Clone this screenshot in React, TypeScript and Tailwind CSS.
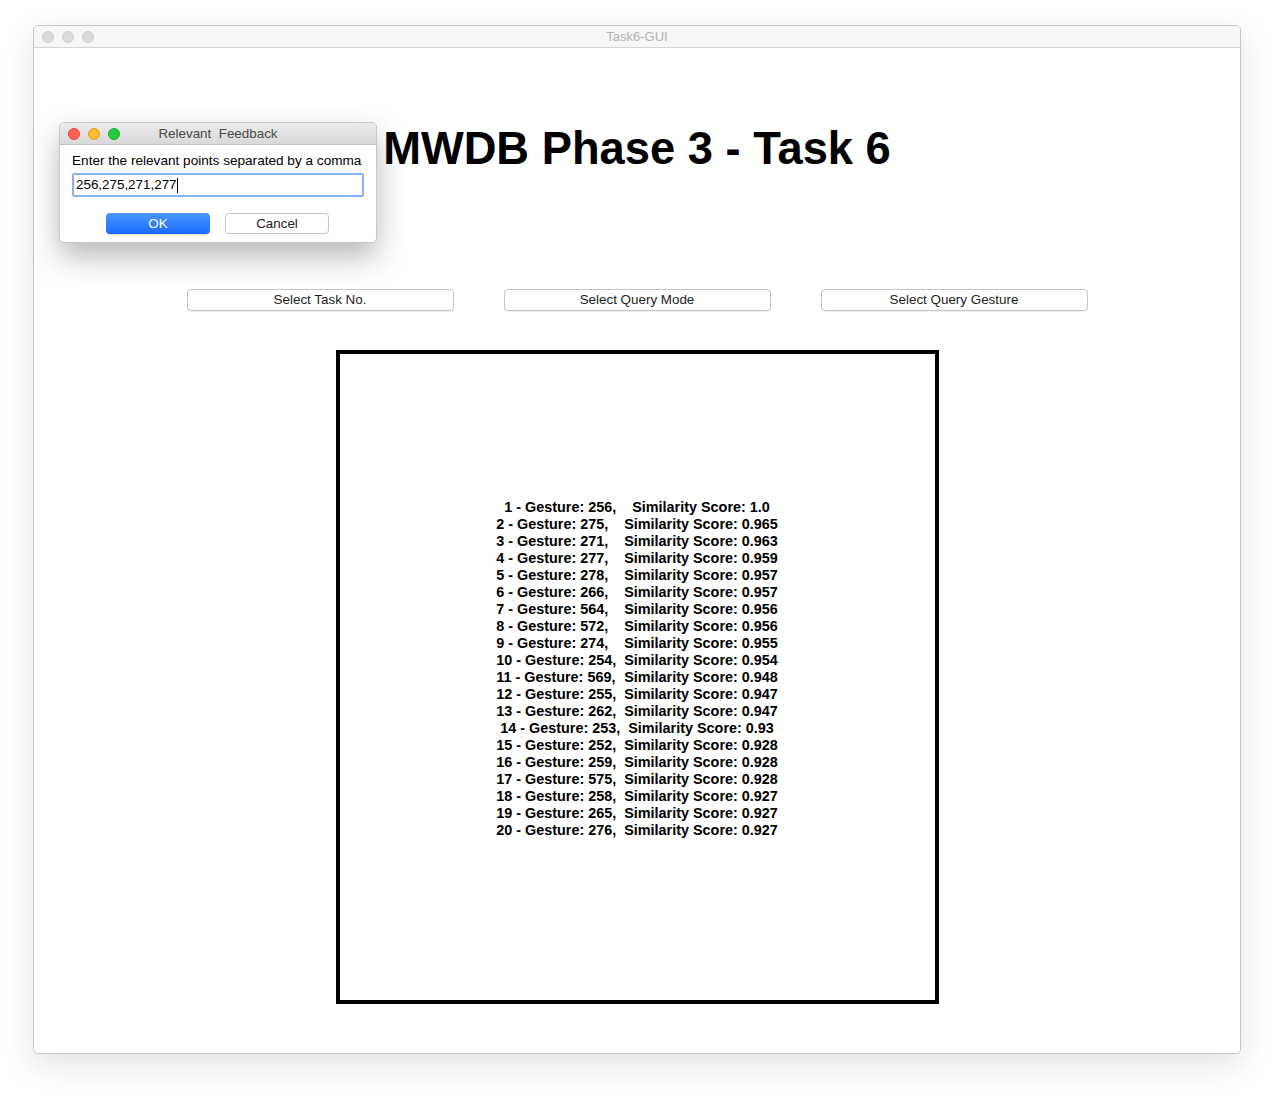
import React from "react";

const results: [number, number, string][] = [
  [1, 256, "1.0"],
  [2, 275, "0.965"],
  [3, 271, "0.963"],
  [4, 277, "0.959"],
  [5, 278, "0.957"],
  [6, 266, "0.957"],
  [7, 564, "0.956"],
  [8, 572, "0.956"],
  [9, 274, "0.955"],
  [10, 254, "0.954"],
  [11, 569, "0.948"],
  [12, 255, "0.947"],
  [13, 262, "0.947"],
  [14, 253, "0.93"],
  [15, 252, "0.928"],
  [16, 259, "0.928"],
  [17, 575, "0.928"],
  [18, 258, "0.927"],
  [19, 265, "0.927"],
  [20, 276, "0.927"],
];

const font = { fontFamily: '"Liberation Sans", Arial, sans-serif' };

function GrayLights() {
  return (
    <div className="flex items-center gap-[8px]">
      <span className="w-[12px] h-[12px] rounded-full bg-[#dcdcdc] border border-[#cfcfcf]" />
      <span className="w-[12px] h-[12px] rounded-full bg-[#dcdcdc] border border-[#cfcfcf]" />
      <span className="w-[12px] h-[12px] rounded-full bg-[#dcdcdc] border border-[#cfcfcf]" />
    </div>
  );
}

function ColorLights() {
  return (
    <div className="flex items-center gap-[8px]">
      <span className="w-[12px] h-[12px] rounded-full bg-[#fe5f57] border border-[#e0443e]" />
      <span className="w-[12px] h-[12px] rounded-full bg-[#febc2e] border border-[#dea123]" />
      <span className="w-[12px] h-[12px] rounded-full bg-[#28c840] border border-[#1aab29]" />
    </div>
  );
}

function TkButton({ label }: { label: string }) {
  return (
    <button className="w-[267px] h-[22px] bg-white border border-[#c4c4c4] rounded-[4px] shadow-[0_1px_0_rgba(0,0,0,0.06)] text-[13.4px] text-[#222] leading-none">
      {label}
    </button>
  );
}

export default function App() {
  return (
    <div className="relative w-[1274px] h-[1096px] bg-white pt-[25px] pl-[33px]" style={font}>
      {/* main window */}
      <div className="w-[1208px] h-[1029px] bg-white border border-[#c6c6c6] rounded-[5px] shadow-[0_10px_30px_rgba(0,0,0,0.12)] overflow-hidden flex flex-col">
        <div className="relative h-[22px] bg-[#f6f6f6] border-b border-[#d6d6d6] flex items-center pl-[8px] shrink-0">
          <GrayLights />
          <div className="absolute inset-0 flex items-center justify-center text-[13px] text-[#b4b4b4]">
            Task6-GUI
          </div>
        </div>

        <div className="flex flex-col items-center">
          <h1 className="mt-[78px] text-[45.3px] leading-[45px] font-bold text-black">
            MWDB Phase 3 - Task 6
          </h1>

          <div className="mt-[118px] flex gap-[50px]">
            <TkButton label="Select Task No." />
            <TkButton label="Select Query Mode" />
            <TkButton label="Select Query Gesture" />
          </div>

          <div className="mt-[39px] w-[603px] h-[654px] border-[4px] border-black flex flex-col items-center justify-center pb-[16px]">
            {results.map(([n, g, s]) => (
              <div key={n} className="flex text-[14.4px] leading-[17px] font-bold text-black whitespace-pre">
                <span className="w-[128px]">{`${n} - Gesture: ${g},`}</span>
                <span>{`Similarity Score: ${s}`}</span>
              </div>
            ))}
          </div>
        </div>
      </div>

      {/* dialog */}
      <div className="absolute left-[59px] top-[122px] w-[318px] h-[121px] bg-white rounded-[5px] border border-[#c8c8c8] shadow-[0_14px_30px_rgba(0,0,0,0.28)] overflow-hidden flex flex-col">
        <div className="relative h-[22px] bg-gradient-to-b from-[#ececec] to-[#d8d8d8] border-b border-[#c4c4c4] flex items-center pl-[8px] shrink-0">
          <ColorLights />
          <div className="absolute inset-0 flex items-center justify-center pt-[1px] text-[13.4px] text-[#4a4a4a] whitespace-pre">
            {"Relevant  Feedback"}
          </div>
        </div>
        <div className="px-[12px] pt-[8px]">
          <div className="text-[13.6px] leading-[16px] text-black whitespace-nowrap">Enter the relevant points separated by a comma</div>
          <div className="mt-[4px] h-[24px] border-[2px] border-[#88b2f2] rounded-[2px] flex items-center px-[2px] text-[13.4px] text-black">
            256,275,271,277<span className="w-px h-[15px] bg-black" />
          </div>
          <div className="mt-[16px] flex gap-[15px] pl-[34px]">
            <button className="w-[104px] h-[21px] rounded-[4px] bg-gradient-to-b from-[#4a96ff] to-[#1a6bff] text-white text-[13.4px] leading-none shadow-[0_1px_1px_rgba(0,0,0,0.15)]">
              OK
            </button>
            <button className="w-[104px] h-[21px] rounded-[4px] bg-white border border-[#c4c4c4] text-[#222] text-[13.4px] leading-none">
              Cancel
            </button>
          </div>
        </div>
      </div>
    </div>
  );
}
